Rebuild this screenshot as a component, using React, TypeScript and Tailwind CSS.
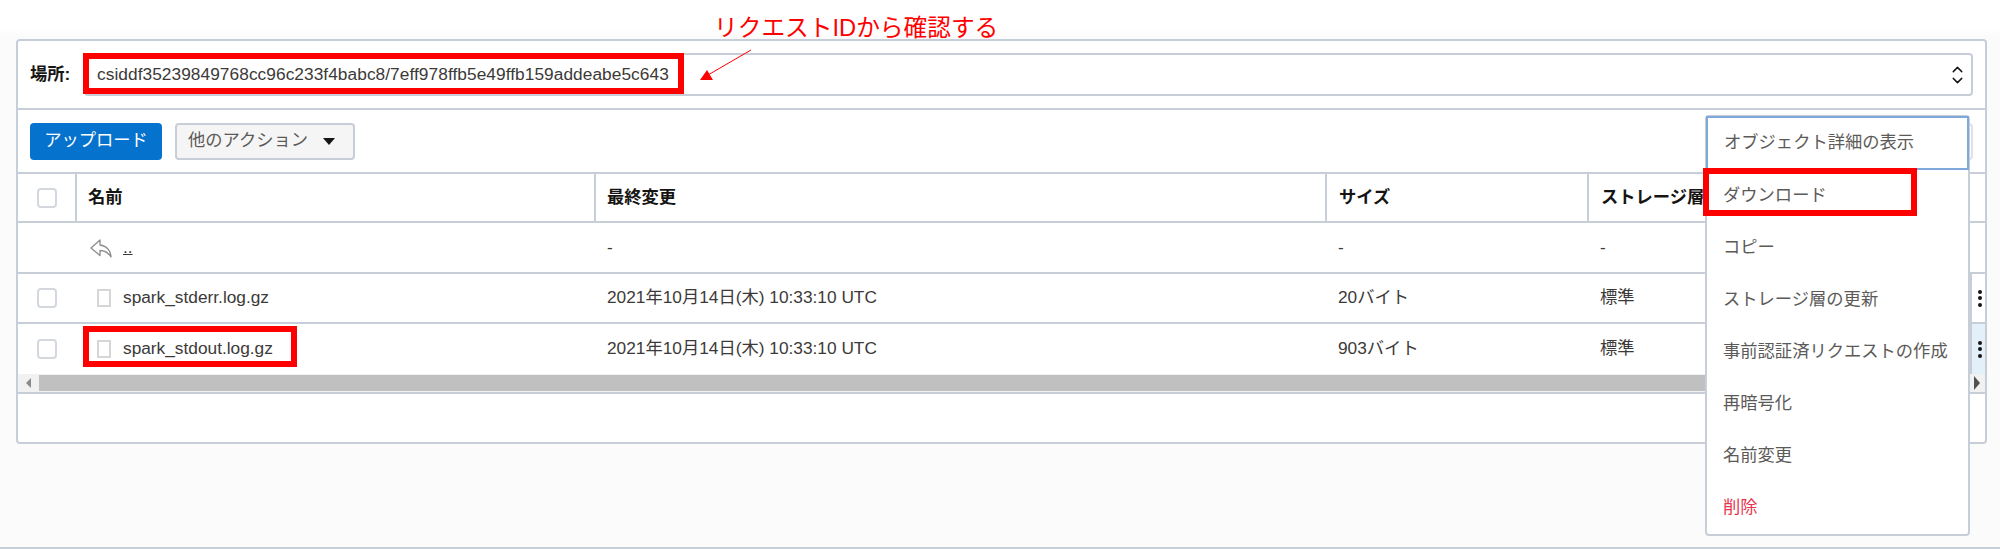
import { ChevronDown, ChevronUp } from 'lucide-react';

const FONT = "font-['Liberation_Sans','Noto_Sans_CJK_JP',sans-serif]";

const COLUMNS = ['w-[57px]', 'w-[519px]', 'w-[731px]', 'w-[262px]', 'w-[383px]'];

const FILES = [
  { name: 'spark_stderr.log.gz', modified: '2021年10月14日(木) 10:33:10 UTC', size: '20バイト', active: false },
  { name: 'spark_stdout.log.gz', modified: '2021年10月14日(木) 10:33:10 UTC', size: '903バイト', active: true },
];

const MENU_ITEMS = ['ダウンロード', 'コピー', 'ストレージ層の更新', '事前認証済リクエストの作成', '再暗号化', '名前変更'];

function Checkbox() {
  return <span className="ml-[19px] block h-5 w-5 rounded-[4px] border-2 border-[#d3d7de] bg-white" />;
}

function Kebab({ active }: { active: boolean }) {
  return (
    <div className={`flex h-full w-[17px] shrink-0 flex-col items-center justify-center gap-[2.5px] border-l-2 border-[#c8ced8] ${active ? 'bg-[#e3eff9]' : 'bg-white'}`}>
      <span className="h-1 w-1 rounded-full bg-[#161513]" />
      <span className="h-1 w-1 rounded-full bg-[#161513]" />
      <span className="h-1 w-1 rounded-full bg-[#161513]" />
    </div>
  );
}

function FileIcon() {
  return <span className="ml-[22px] mr-3 block h-[18px] w-[14px] shrink-0 border-2 border-[#d6d6d6] bg-white" />;
}

function BackIcon() {
  return (
    <svg className="ml-[15px] mr-[11px] shrink-0" width="22" height="20" viewBox="0 0 22 20" fill="none" stroke="#8c8c8c" strokeWidth="1.3" strokeLinejoin="round">
      <path d="M10 2 1 10l9 7.5V12.5c5 0 8.5 2.5 11 6.5 0-6-4-11-11-12z" />
    </svg>
  );
}

export default function App() {
  return (
    <div className={`${FONT} relative flex h-[549px] w-[2000px] flex-col overflow-hidden border-b-2 border-[#c8ced8] bg-[#fbfbfb] text-[17.3px] text-[#3c3a38]`}>
      <div className="h-[39px] shrink-0 bg-[linear-gradient(#ffffff_72%,#fafafa)]" />

      {/* メインパネル */}
      <div className="ml-4 flex h-[405px] w-[1971px] flex-col overflow-hidden rounded-[4px] border-2 border-[#c8ced8] bg-white">
        {/* 場所 */}
        <div className="flex h-[69px] shrink-0 items-center border-b-2 border-[#c8ced8] pl-[12px] pr-[12px]">
          <span className="w-[54px] shrink-0 font-bold text-[#161513]">場所:</span>
          <div className="flex h-[43px] flex-1 items-center justify-between rounded-[4px] border-2 border-[#c8ced8] pl-[11px] pr-[5px]">
            <span className="tracking-[0.06px]">csiddf35239849768cc96c233f4babc8/7eff978ffb5e49ffb159addeabe5c643</span>
            <span className="flex flex-col text-[#161513]">
              <ChevronUp size={17} strokeWidth={2} className="-mb-[6px]" />
              <ChevronDown size={17} strokeWidth={2} />
            </span>
          </div>
        </div>

        {/* ツールバー */}
        <div className="flex h-[62px] shrink-0 items-center justify-between pl-[12px] pr-[12px]">
          <div className="flex items-center gap-[13px]">
            <button className="flex h-[37px] w-[132px] items-center justify-center rounded-[4px] bg-[#0572ce] text-white">アップロード</button>
            <button className="flex h-[37px] w-[180px] items-center gap-[15px] rounded-[4px] border-2 border-[#c8ced8] bg-[#f5f5f5] pl-[11px] text-[#5c5a58]">
              他のアクション
              <span className="h-0 w-0 border-x-[6px] border-t-[7px] border-x-transparent border-t-[#161513]" />
            </button>
          </div>
          <div className="h-[37px] w-[200px] rounded-[4px] border-2 border-[#dfe2e7] bg-white" />
        </div>

        {/* テーブル */}
        <div className="flex h-[51px] shrink-0 items-center border-y-2 border-[#c8ced8] font-bold text-[#161513]">
          <div className={`${COLUMNS[0]} flex h-full shrink-0 items-center`}><Checkbox /></div>
          <div className={`${COLUMNS[1]} flex h-full shrink-0 items-center border-l-2 border-[#c8ced8] pl-[11px]`}>名前</div>
          <div className={`${COLUMNS[2]} flex h-full shrink-0 items-center border-l-2 border-[#c8ced8] pl-[11px]`}>最終変更</div>
          <div className={`${COLUMNS[3]} flex h-full shrink-0 items-center border-l-2 border-[#c8ced8] pl-[12px]`}>サイズ</div>
          <div className={`${COLUMNS[4]} flex h-full shrink-0 items-center border-l-2 border-[#c8ced8] pl-[12px]`}>ストレージ層</div>
        </div>

        <div className="flex h-[51px] shrink-0 items-center border-b-2 border-[#c8ced8]">
          <div className={`${COLUMNS[0]} shrink-0`} />
          <div className={`${COLUMNS[1]} flex shrink-0 items-center`}>
            <BackIcon />
            <span className="underline">..</span>
          </div>
          <div className={`${COLUMNS[2]} shrink-0 pl-[13px]`}>-</div>
          <div className={`${COLUMNS[3]} shrink-0 pl-[13px]`}>-</div>
          <div className={`${COLUMNS[4]} shrink-0 pl-[13px]`}>-</div>
        </div>

        {FILES.map((file) => (
          <div key={file.name} className={`flex h-[50px] shrink-0 items-center ${file.active ? '' : 'border-b-2 border-[#c8ced8]'}`}>
            <div className={`${COLUMNS[0]} shrink-0`}><Checkbox /></div>
            <div className={`${COLUMNS[1]} flex shrink-0 items-center`}>
              <FileIcon />
              <span>{file.name}</span>
            </div>
            <div className={`${COLUMNS[2]} shrink-0 pl-[13px]`}>{file.modified}</div>
            <div className={`${COLUMNS[3]} shrink-0 pl-[13px]`}>{file.size}</div>
            <div className={`${COLUMNS[4]} shrink-0 pl-[13px]`}>標準</div>
            <Kebab active={file.active} />
          </div>
        ))}

        {/* スクロールバー */}
        <div className="flex h-[20px] shrink-0 items-center border-b-2 border-[#c8ced8] bg-[#f1f1f1]">
          <span className="ml-[8px] h-0 w-0 border-y-[5px] border-r-[5px] border-y-transparent border-r-[#8a8a8a]" />
          <span className="ml-[8px] h-4 w-[1900px] bg-[#c0c0c0]" />
          <span className="ml-auto mr-[5px] h-0 w-0 border-y-[7px] border-l-[6px] border-y-transparent border-l-[#505050]" />
        </div>
      </div>

      {/* アクションメニュー */}
      <div className="absolute left-[1705px] top-[115px] flex h-[421px] w-[265px] flex-col rounded-[4px] border-2 border-[#c8ced8] bg-white text-[#5c5a58]">
        <div className="-mx-[1px] -mt-[1px] flex h-[54px] shrink-0 items-center border-2 border-[#7fa9dc] pl-[16px]">オブジェクト詳細の表示</div>
        {MENU_ITEMS.map((item) => (
          <div key={item} className="flex h-[52px] shrink-0 items-center pl-[16px]">{item}</div>
        ))}
        <div className="flex h-[52px] shrink-0 items-center pl-[16px] text-[#e8344e]">削除</div>
      </div>

      {/* 注釈 */}
      <span className="absolute left-[714px] top-[11px] text-[23.7px] font-normal leading-[34px] text-[#ff0000]">リクエストIDから確認する</span>
      <span className="absolute left-[83px] top-[53px] h-[41px] w-[601px] border-[6px] border-[#ff0000]" />
      <span className="absolute left-[83px] top-[326px] h-[41px] w-[214px] border-[6px] border-[#ff0000]" />
      <span className="absolute left-[1703px] top-[168px] h-[48px] w-[214px] border-[6px] border-[#ff0000]" />
      <svg className="absolute left-[695px] top-[45px]" width="60" height="40" viewBox="0 0 60 40">
        <path d="M56 5 13 30" stroke="#ff0000" strokeWidth="1" />
        <path d="M5 35 12 25l6 10z" fill="#ff0000" />
      </svg>
    </div>
  );
}
